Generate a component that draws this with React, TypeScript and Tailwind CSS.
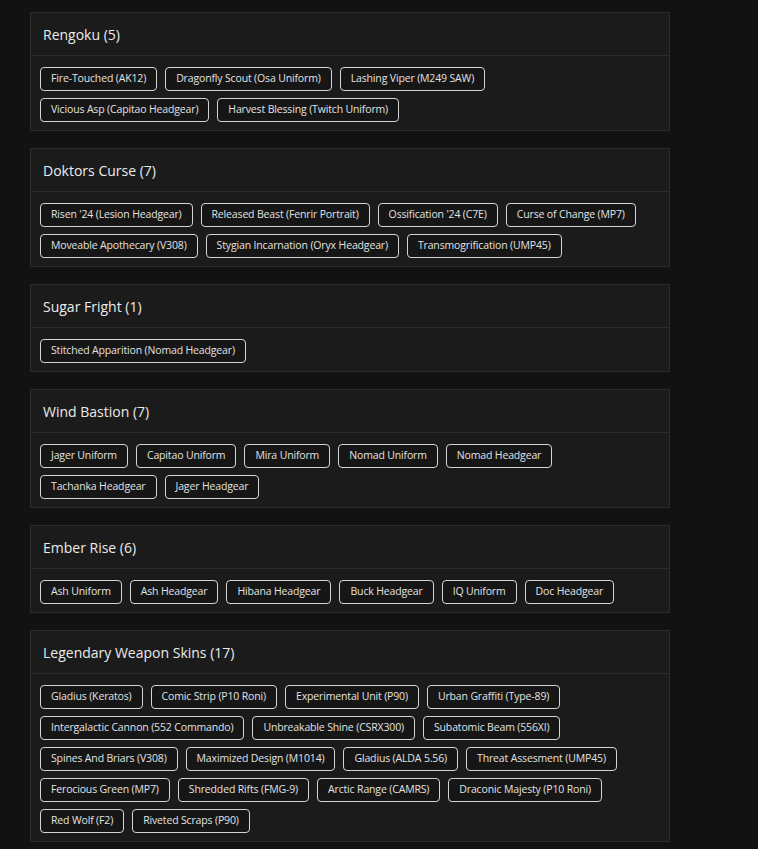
import React from 'react'

const groups: { title: string; items: string[] }[] = [
  { title: 'Rengoku (5)', items: ['Fire-Touched (AK12)', 'Dragonfly Scout (Osa Uniform)', 'Lashing Viper (M249 SAW)', 'Vicious Asp (Capitao Headgear)', 'Harvest Blessing (Twitch Uniform)'] },
  { title: 'Doktors Curse (7)', items: ["Risen '24 (Lesion Headgear)", 'Released Beast (Fenrir Portrait)', "Ossification '24 (C7E)", 'Curse of Change (MP7)', 'Moveable Apothecary (V308)', 'Stygian Incarnation (Oryx Headgear)', 'Transmogrification (UMP45)'] },
  { title: 'Sugar Fright (1)', items: ['Stitched Apparition (Nomad Headgear)'] },
  { title: 'Wind Bastion (7)', items: ['Jager Uniform', 'Capitao Uniform', 'Mira Uniform', 'Nomad Uniform', 'Nomad Headgear', 'Tachanka Headgear', 'Jager Headgear'] },
  { title: 'Ember Rise (6)', items: ['Ash Uniform', 'Ash Headgear', 'Hibana Headgear', 'Buck Headgear', 'IQ Uniform', 'Doc Headgear'] },
  { title: 'Legendary Weapon Skins (17)', items: ['Gladius (Keratos)', 'Comic Strip (P10 Roni)', 'Experimental Unit (P90)', 'Urban Graffiti (Type-89)', 'Intergalactic Cannon (552 Commando)', 'Unbreakable Shine (CSRX300)', 'Subatomic Beam (556XI)', 'Spines And Briars (V308)', 'Maximized Design (M1014)', 'Gladius (ALDA 5.56)', 'Threat Assesment (UMP45)', 'Ferocious Green (MP7)', 'Shredded Rifts (FMG-9)', 'Arctic Range (CAMRS)', 'Draconic Majesty (P10 Roni)', 'Red Wolf (F2)', 'Riveted Scraps (P90)'] },
]

export default function App() {
  return (
    <div className="min-h-screen bg-[#121212] pt-3 pl-[30px] pb-4" style={{ fontFamily: '"Open Sans", "Noto Sans", sans-serif' }}>
      <div className="w-[640px] flex flex-col gap-[17px]">
        {groups.map(g => (
          <div key={g.title} className="bg-[#1b1b1b] border border-[#2b2b2b]">
            <div className="h-[43px] px-3 flex items-center border-b border-[#2b2b2b] text-[14px] font-medium text-[#ebebeb]">
              {g.title}
            </div>
            <div className="px-[9px] pt-[11px] pb-[8px] flex flex-wrap gap-x-[8px] gap-y-[7px]">
              {g.items.map(it => (
                <span key={it} className="h-[24px] px-[10px] inline-flex items-center rounded-[4px] border border-[#d4d4d4] bg-[#161616] text-[10.5px] text-[#e2e2e2] tracking-[-0.15px]">
                  {it}
                </span>
              ))}
            </div>
          </div>
        ))}
      </div>
    </div>
  )
}
